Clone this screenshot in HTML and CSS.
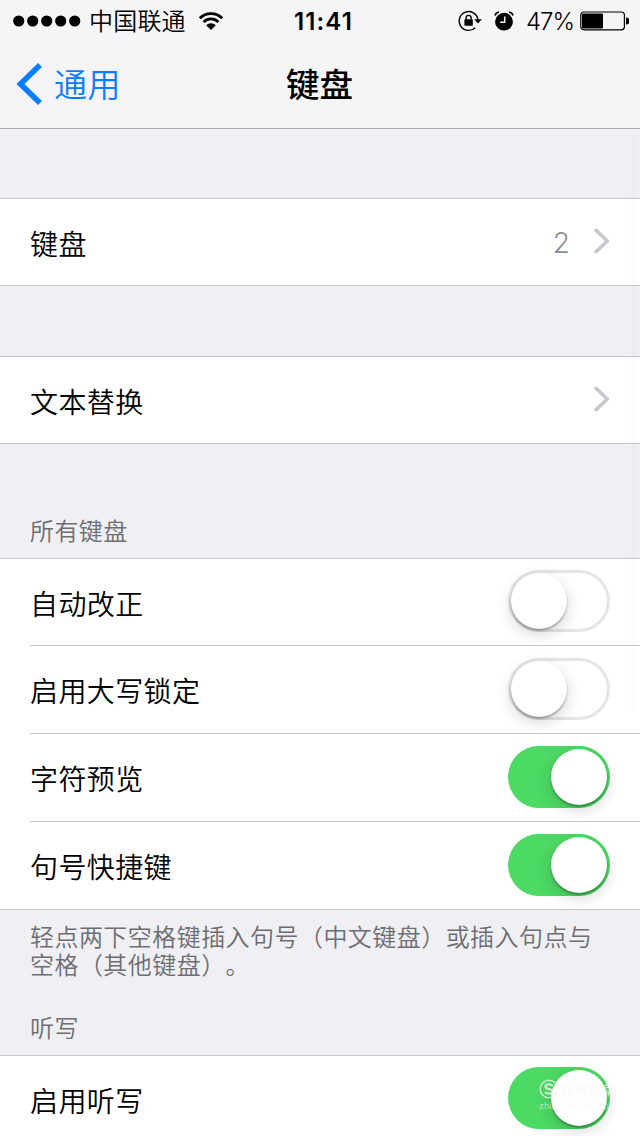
FILE: index.html
```html
<!DOCTYPE html>
<html lang="zh-CN">
<head>
<meta charset="utf-8">
<title>键盘</title>
<link rel="stylesheet" href="styles.css">
</head>
<body>
<div class="screen">
  <header class="top">
    <div class="status">
      <div class="status-left">
        <svg class="dots" width="68" height="12" viewBox="0 0 68 12"><circle cx="5.7" cy="6" r="5.6"/><circle cx="19.7" cy="6" r="5.6"/><circle cx="33.7" cy="6" r="5.6"/><circle cx="47.7" cy="6" r="5.6"/><circle cx="61.7" cy="6" r="5.6"/></svg>
        <span class="carrier">中国联通</span>
        <svg class="wifi" width="26" height="20" viewBox="0 0 26 20"><path d="M1.8 7.2a15.8 15.8 0 0 1 22.4 0M5.6 11a10.4 10.4 0 0 1 14.8 0" fill="none" stroke="#000" stroke-width="2.7"/><path d="M8.2 14.2a6.8 6.8 0 0 1 9.6 0L13 19z"/></svg>
      </div>
      <div class="clock">11:41</div>
      <div class="status-right">
        <svg class="lock" width="24" height="22" viewBox="0 0 24 22"><path d="M17.2 17.7A9.4 9.4 0 1 1 19.9 9.6" fill="none" stroke="#000" stroke-width="1.4"/><path d="M16.2 9.2h7.6L20 13.4z"/><rect x="6.4" y="9.3" width="8.4" height="6.4" rx=".7"/><path d="M8.1 9.8V7.9a2.5 2.5 0 0 1 5 0v1.9" fill="none" stroke="#000" stroke-width="1.4"/></svg>
        <svg class="alarm" width="20" height="20" viewBox="0 0 20 20"><circle cx="10" cy="10.7" r="8.9"/><path d="M.9 4.4A5 5 0 0 1 5 1M19.1 4.4A5 5 0 0 0 15 1" fill="none" stroke="#000" stroke-width="1.6"/><path d="M10.7 5.5v5.8H6.2" fill="none" stroke="#f5f5f7" stroke-width="1.5"/></svg>
        <span class="percent">47%</span>
        <svg class="battery" width="49" height="20" viewBox="0 0 49 20"><rect x=".8" y="1" width="43.6" height="17.8" rx="3" fill="none" stroke="#000" stroke-width="1.2"/><rect x="2" y="2.6" width="21" height="14.8" rx="1"/><path d="M46 6.5a3.3 3.3 0 0 1 0 7z"/></svg>
      </div>
    </div>
    <nav class="nav">
      <div class="back"><svg width="26" height="42" viewBox="0 0 26 42"><path d="M24 2L4.5 21 24 40" fill="none" stroke="#087efe" stroke-width="5.6"/></svg><span>通用</span></div>
      <h1 class="title">键盘</h1>
    </nav>
  </header>
  <main>
    <section class="group first">
      <div class="row link"><span class="label">键盘</span><span class="value">2</span><svg class="chevron" width="17" height="26" viewBox="0 0 17 26"><path d="M2 1.3L14.2 13 2 24.7" fill="none" stroke="#c7c7cc" stroke-width="3.6"/></svg></div>
    </section>
    <section class="group second">
      <div class="row link"><span class="label">文本替换</span><svg class="chevron" width="17" height="26" viewBox="0 0 17 26"><path d="M2 1.3L14.2 13 2 24.7" fill="none" stroke="#c7c7cc" stroke-width="3.6"/></svg></div>
    </section>
    <h2 class="heading all">所有键盘</h2>
    <section class="group">
      <div class="row"><span class="label">自动改正</span><span class="switch"><i class="knob"></i></span></div>
      <div class="row"><span class="label">启用大写锁定</span><span class="switch"><i class="knob"></i></span></div>
      <div class="row"><span class="label">字符预览</span><span class="switch on"><i class="knob"></i></span></div>
      <div class="row last"><span class="label">句号快捷键</span><span class="switch on"><i class="knob"></i></span></div>
    </section>
    <p class="note">轻点两下空格键插入句号（中文键盘）或插入句点与<br>空格（其他键盘）。</p>
    <h2 class="heading dictation">听写</h2>
    <section class="group">
      <div class="row only"><span class="label">启用听写</span><span class="switch on"><i class="knob"></i></span></div>
    </section>
  </main>
  <div class="scrollbar"></div>
  <div class="watermark">
    <div class="mark-name"><svg width="20" height="20" viewBox="0 0 20 20"><circle cx="10" cy="10" r="8.8" fill="none" stroke="currentColor" stroke-width="1.4"/><path d="M14 6.6C11 4.4 6.5 5.2 6.5 7.7c0 2.9 7.2 1.8 7.2 4.7 0 2.5-4.9 3-7.8.8" fill="none" stroke="currentColor" stroke-width="2.3"/></svg><span>搜狗指南</span></div>
    <div class="mark-site">zhinan.sogou.com</div>
  </div>
</div>
</body>
</html>
```

FILE: styles.css
```css
* { box-sizing: border-box; }
body { margin: 0; }
.screen {
  position: relative;
  width: 640px;
  height: 1136px;
  overflow: hidden;
  background: #efeff4;
  color: #000;
  font-family: Inter, "Noto Sans CJK SC DemiLight", "Noto Sans CJK SC", sans-serif;
  font-weight: 350;
  text-spacing-trim: space-all;
}
svg { display: block; flex: none; }
.top { height: 129px; background: #f5f5f7; border-bottom: 1px solid #a9a9b0; }
.status { display: grid; grid-template-columns: 1fr auto 1fr; align-items: center; height: 40px; padding: 0 11px 0 13px; }
.status-left, .status-right { display: flex; align-items: center; }
.status-right { justify-content: flex-end; }
.carrier { margin-left: 8px; padding-top: 2px; font-size: 24px; letter-spacing: .2px; line-height: 40px; }
.wifi { margin-left: 12px; margin-bottom: 1px; }
.clock { padding: 1px 0 0 5px; font-size: 24px; font-weight: 600; letter-spacing: 1.1px; line-height: 40px; }
.alarm { margin-left: 12px; }
.percent { margin-left: 12px; padding-top: 1px; font-size: 24px; line-height: 40px; letter-spacing: -1px; }
.battery { margin-left: 6px; }
.lock, .alarm { margin-bottom: 1px; }
.nav { display: grid; grid-template-columns: 1fr auto 1fr; align-items: center; height: 88px; }
.back { display: flex; align-items: center; padding-left: 16px; color: #087efe; font-size: 33px; line-height: 48px; }
.back span { margin-left: 12px; padding-top: 2px; letter-spacing: .5px; }
.title { margin: 0; padding: 2px 1px 0 0; font-family: Inter, "Noto Sans CJK SC", sans-serif; font-size: 33.5px; font-weight: 500; line-height: 48px; }
.group { background: #fff; border-top: 1px solid #c8c7cc; border-bottom: 1px solid #c8c7cc; }
.first { margin-top: 69px; }
.second { margin-top: 70px; }
.row { display: flex; align-items: center; height: 88px; margin-left: 30px; padding-right: 30px; border-bottom: 1px solid #c8c7cc; }
.row:first-child { height: 87px; }
.row:last-child { border-bottom: 0; }
.row.last { height: 87px; }
.row.only { height: 86px; }
.row.link { height: 86px; padding-right: 30px; }
.label { flex: 1; font-size: 28px; letter-spacing: .4px; line-height: 42px; padding-top: 5px; }
.value { margin-right: 23px; padding-top: 2px; color: #8e8e93; font-size: 28px; }
.chevron { margin-bottom: 2px; }
.heading { margin: 0; padding-left: 30px; color: #6d6d72; font-size: 24px; font-weight: 350; letter-spacing: .4px; line-height: 36px; }
.all { padding-top: 70px; height: 114px; }
.dictation { padding-top: 45px; height: 89px; }
.note { margin: 0; height: 56px; padding: 14px 0 0 30px; color: #6d6d72; font-size: 24px; letter-spacing: .45px; line-height: 28px; white-space: nowrap; }
.switch { display: flex; width: 102px; height: 62px; margin-bottom: 2px; padding: 3px; border-radius: 31px; background: #fff; box-shadow: inset 0 0 0 3px #e5e5e5; }
.switch.on { justify-content: flex-end; background: #4cd964; box-shadow: none; }
.knob { width: 56px; height: 56px; border-radius: 50%; background: #fff; box-shadow: 0 2px 2px rgba(0,0,0,.28), 0 5px 15px rgba(0,0,0,.17); }
.scrollbar { position: absolute; right: 3px; top: 134px; width: 6px; height: 578px; border-radius: 3px; background: rgba(0,0,0,.01); }
.watermark { position: absolute; left: 539px; top: 1079px; color: rgba(246,246,246,.75); }
.mark-name { display: flex; align-items: center; gap: 2px; height: 20px; font-size: 13.5px; font-weight: 500; }
.mark-site { font-size: 9px; line-height: 14px; }
```
